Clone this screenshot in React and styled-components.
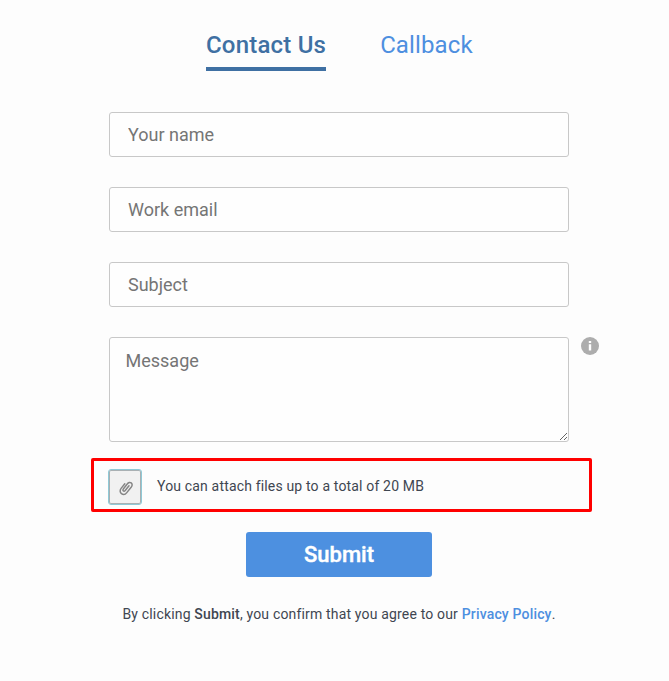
import React from "react";
import styled, { createGlobalStyle } from "styled-components";

const GlobalStyle = createGlobalStyle`
  * {
    box-sizing: border-box;
  }

  body {
    margin: 0;
    background: #fdfdfd;
    font-family: Roboto, sans-serif;
    color: #3f4651;
  }
`;

const Wrapper = styled.main`
  width: 669px;
  height: 681px;
  padding: 26px 0 0 109px;
  overflow: hidden;
`;

const Tabs = styled.nav`
  display: flex;
  gap: 54px;
  padding-left: 97px;
  margin-bottom: 41px;
`;

const Tab = styled.a`
  height: 45px;
  border-bottom: 4px solid ${(props) => (props.$active ? "#3f70a3" : "transparent")};
  color: ${(props) => (props.$active ? "#3f70a3" : "#4d8fe0")};
  font-size: 24px;
  font-weight: ${(props) => (props.$active ? 500 : 400)};
  line-height: 38px;
  letter-spacing: ${(props) => (props.$active ? "0.2px" : "0.12px")};
  white-space: nowrap;
  cursor: pointer;
`;

const Form = styled.form`
  display: flex;
  flex-direction: column;
  width: 460px;
`;

const Input = styled.input`
  height: 45px;
  margin-bottom: 30px;
  padding: 0 18px;
  border: 1px solid #c8c8c8;
  border-radius: 3px;
  background: #fefefe;
  font: 400 18px Roboto, sans-serif;
  outline: none;

  &::placeholder {
    color: #757575;
  }
`;

const MessageRow = styled.div`
  display: flex;
  gap: 12px;
  width: 490px;
`;

const Textarea = styled.textarea`
  width: 460px;
  height: 105px;
  padding: 12px 15.5px;
  border: 1px solid #c8c8c8;
  border-radius: 3px;
  background: #fefefe;
  font: 400 18px Roboto, sans-serif;
  outline: none;

  &::placeholder {
    color: #757575;
  }
`;

const InfoIcon = styled.svg`
  flex: none;
  width: 18px;
  height: 18px;
`;

const Attachment = styled.div`
  display: flex;
  align-items: center;
  gap: 15px;
  width: 501px;
  height: 54px;
  margin: 16px 0 20px -18px;
  padding: 4px 0 0 14px;
  border: 3px solid #ff0000;
  border-radius: 2px;
  font-size: 14px;
  letter-spacing: 0.165px;

  span {
    padding-bottom: 2px;
  }
`;

const AttachButton = styled.button`
  display: flex;
  align-items: center;
  justify-content: center;
  width: 34px;
  height: 36px;
  padding: 1px 0 0 1px;
  border: 1px solid #8fc9d6;
  border-radius: 3px;
  background: #f1f1f1;
  box-shadow: inset 0 0 0 1px #a9b0b3;
`;

const SubmitButton = styled.button`
  align-self: center;
  width: 186px;
  height: 45px;
  border: 0;
  border-radius: 3px;
  background: #4d90e0;
  color: #fff;
  font: 500 22px Roboto, sans-serif;
  -webkit-text-stroke: 0.4px #fff;
`;

const Terms = styled.p`
  margin: 28px 0 0;
  font-size: 14px;
  line-height: 18px;
  letter-spacing: 0.17px;
  text-align: center;
  white-space: nowrap;

  b {
    font-weight: 500;
  }

  a {
    color: #4d8fe0;
    font-weight: 500;
  }
`;

const App = () => {
  return (
    <Wrapper>
      <GlobalStyle />
      <Tabs>
        <Tab $active>Contact Us</Tab>
        <Tab>Callback</Tab>
      </Tabs>
      <Form>
        <Input placeholder="Your name" />
        <Input placeholder="Work email" />
        <Input placeholder="Subject" />
        <MessageRow>
          <Textarea placeholder="Message" />
          <InfoIcon viewBox="0 0 18 18">
            <circle cx="9" cy="9" r="9" fill="#adadad" />
            <path d="M7.8 4h2.4v2H7.8zM7.8 7.2h2.4V13.5H7.8z" fill="#fff" />
          </InfoIcon>
        </MessageRow>
        <Attachment>
          <AttachButton type="button">
            <svg width="16" height="18" viewBox="0 0 16 18" fill="none" stroke="#858585" strokeWidth="1.5" strokeLinecap="round">
              <path d="M11 6.8L7.2 11.5C5.9 13 4.1 11.6 5.3 10L9.2 5C11.8 1.4 15.9 4.6 13.3 8L8.8 13.6C5.4 17.8-.1 13.4 3.1 9.4L6.8 4.8" />
            </svg>
          </AttachButton>
          <span>You can attach files up to a total of 20 MB</span>
        </Attachment>
        <SubmitButton type="button">Submit</SubmitButton>
        <Terms>
          By clicking <b>Submit</b>, you confirm that you agree to our <a>Privacy Policy</a>.
        </Terms>
      </Form>
    </Wrapper>
  );
};

export default App;
